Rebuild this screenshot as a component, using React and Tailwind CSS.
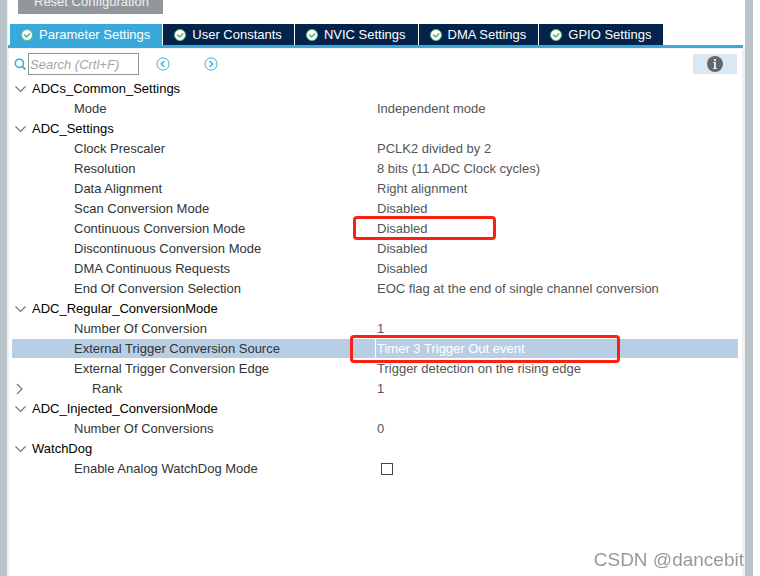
import React, { useState } from 'react';

const tabs = ['Parameter Settings', 'User Constants', 'NVIC Settings', 'DMA Settings', 'GPIO Settings'];

const groups = [
  {
    name: 'ADCs_Common_Settings',
    params: [{ name: 'Mode', value: 'Independent mode' }],
  },
  {
    name: 'ADC_Settings',
    params: [
      { name: 'Clock Prescaler', value: 'PCLK2 divided by 2' },
      { name: 'Resolution', value: '8 bits (11 ADC Clock cycles)' },
      { name: 'Data Alignment', value: 'Right alignment' },
      { name: 'Scan Conversion Mode', value: 'Disabled' },
      { name: 'Continuous Conversion Mode', value: 'Disabled', mark: 'small' },
      { name: 'Discontinuous Conversion Mode', value: 'Disabled' },
      { name: 'DMA Continuous Requests', value: 'Disabled' },
      { name: 'End Of Conversion Selection', value: 'EOC flag at the end of single channel conversion' },
    ],
  },
  {
    name: 'ADC_Regular_ConversionMode',
    params: [
      { name: 'Number Of Conversion', value: '1' },
      { name: 'External Trigger Conversion Source', value: 'Timer 3 Trigger Out event', mark: 'large' },
      { name: 'External Trigger Conversion Edge', value: 'Trigger detection on the rising edge' },
      { name: 'Rank', value: '1', nested: true },
    ],
  },
  {
    name: 'ADC_Injected_ConversionMode',
    params: [{ name: 'Number Of Conversions', value: '0' }],
  },
  {
    name: 'WatchDog',
    params: [{ name: 'Enable Analog WatchDog Mode', checkbox: true }],
  },
];

const CheckBadge = () => (
  <svg className="w-3 h-3 shrink-0" viewBox="0 0 12 12" fill="none">
    <circle cx="6" cy="6" r="5.5" fill="#fff" stroke="#5cb883" strokeWidth="0.9" />
    <path d="M3.1 5.5l2.5 2.5 3.5-3.5" stroke="#4bb377" strokeWidth="1.5" />
  </svg>
);

const SearchIcon = () => (
  <svg className="w-3 h-3 shrink-0" viewBox="0 0 12 12" fill="none" stroke="#39a9dc">
    <circle cx="5.4" cy="5.3" r="4.1" strokeWidth="1.5" />
    <path d="M8.3 8.3l3.2 3.2" strokeWidth="1.8" />
  </svg>
);

const Chevron = ({ open }) => (
  <svg className="w-[14px] h-[14px]" viewBox="0 0 14 14" fill="none" stroke="#777777" strokeWidth="1.2">
    <path d={open ? 'M1.5 4.5l5 5 5-5' : 'M3 2l5 5-5 5'} />
  </svg>
);

const StepButton = ({ label, d }) => (
  <button type="button" aria-label={label} className="w-[14px] h-[14px]">
    <svg className="w-[14px] h-[14px]" viewBox="0 0 14 14" fill="none" stroke="#39a9dc">
      <circle cx="7" cy="7" r="6.1" strokeWidth="1" />
      <path d={d} strokeWidth="1.3" />
    </svg>
  </button>
);

const Mark = ({ size }) => (
  <span
    className={
      size === 'small'
        ? 'absolute z-10 -left-[22px] -top-[3px] w-[143px] h-6 border-3 border-[#fb2010] rounded-sm'
        : 'absolute z-10 -left-[25px] -top-1 w-[270px] h-7 border-3 border-[#fb2010] rounded-sm'
    }
  ></span>
);

const ParamRow = ({ param, selected, onSelect }) => (
  <tr className="h-5" onClick={onSelect}>
    <th scope="row" className="p-0 pb-px font-normal text-left text-[#333333]">
      <div className={`flex items-center h-[19px] ${selected ? 'bg-[#b8cee5]' : ''}`}>
        <span className="flex w-[62px] pl-[2px]">
          {param.nested && (
            <button type="button" aria-label={`Expand ${param.name}`}>
              <Chevron open={false} />
            </button>
          )}
        </span>
        <label htmlFor={param.checkbox ? 'watchdog' : undefined} className={param.nested ? 'pl-[18px]' : ''}>
          {param.name}
        </label>
      </div>
    </th>
    <td className="relative p-0 pb-px text-[#555555]">
      <div
        className={`flex items-center h-[19px] border-l pl-px ${
          selected ? 'bg-[#b8cee5] border-white text-white' : 'border-transparent'
        }`}
      >
        {param.checkbox ? (
          <input
            id="watchdog"
            type="checkbox"
            className="appearance-none w-3 h-3 ml-1 border border-[#444444] bg-white checked:bg-[#39a9dc]"
          />
        ) : (
          param.value
        )}
      </div>
      {param.mark && <Mark size={param.mark} />}
    </td>
  </tr>
);

const ParamGroup = ({ group, selected, onSelect }) => {
  const [open, setOpen] = useState(true);

  return (
    <tbody>
      <tr className="h-5">
        <th colSpan={2} scope="rowgroup" className="p-0 pb-px font-normal text-left text-black">
          <button type="button" onClick={() => setOpen(!open)} className="flex items-center gap-1 h-[19px] pl-[2px]">
            <Chevron open={open} />
            {group.name}
          </button>
        </th>
      </tr>
      {open &&
        group.params.map((param) => (
          <ParamRow
            key={param.name}
            param={param}
            selected={selected === param.name}
            onSelect={() => onSelect(param.name)}
          />
        ))}
    </tbody>
  );
};

export default function App() {
  const [activeTab, setActiveTab] = useState('Parameter Settings');
  const [selected, setSelected] = useState('External Trigger Conversion Source');

  return (
    <div className="min-h-screen flex bg-white pr-[7px] text-[13px] leading-[19px] font-['Liberation_Sans',Arial,sans-serif]">
      <div className="w-[7px] shrink-0 bg-[#b8c4ca]"></div>

      <main className="flex-1 min-w-0 flex flex-col border-l border-[#e9edf1]">
        <div className="flex items-end h-[14px] overflow-hidden pl-[10px] shrink-0">
          <button type="button" className="h-[25px] pl-4 pr-[14px] shrink-0 bg-[#91989d] text-[#f0f0f0]">
            Reset Configuration
          </button>
        </div>

        <div role="tablist" className="flex gap-px mt-[10px] pl-[2px] mr-[2px] border-b-3 border-[#39a9dc]">
          {tabs.map((tab) => (
            <button
              key={tab}
              type="button"
              role="tab"
              aria-selected={activeTab === tab}
              onClick={() => setActiveTab(tab)}
              className={`flex items-center gap-[6px] h-[21px] pl-[11px] pr-3 text-white ${
                activeTab === tab ? 'bg-[#39a9dc]' : 'bg-[#03234b]'
              }`}
            >
              <CheckBadge />
              {tab}
            </button>
          ))}
        </div>

        <div className="flex-1 border-l border-r-3 border-t border-[#f0f1f2] pl-[3px] pr-1">
          <div className="flex items-center mt-1 pl-[2px] pr-px">
            <SearchIcon />
            <input
              type="text"
              aria-label="Search"
              placeholder="Search (Crtl+F)"
              className="w-[111px] h-[22px] ml-[2px] pl-px border border-[#8d959b] italic placeholder:text-[#a5a5a5] focus:outline-none"
            />
            <div className="flex gap-[34px] ml-[17px]">
              <StepButton label="Previous result" d="M8.3 4L5.3 7l3 3" />
              <StepButton label="Next result" d="M5.7 4l3 3-3 3" />
            </div>
            <button
              type="button"
              aria-label="Information"
              className="flex items-center justify-center w-11 h-5 ml-auto bg-[#d9e8f5]"
            >
              <svg className="w-4 h-4" viewBox="0 0 16 16">
                <circle cx="8" cy="8" r="8" fill="#666666" />
                <path d="M7 3h2v2H7zM6 6h3v6h1v1H6v-1h1V7H6z" fill="#d9e8f5" />
              </svg>
            </button>
          </div>

          <table className="w-full mt-1 table-fixed border-collapse">
            <colgroup>
              <col className="w-1/2" />
              <col className="w-1/2" />
            </colgroup>
            {groups.map((group) => (
              <ParamGroup key={group.name} group={group} selected={selected} onSelect={setSelected} />
            ))}
          </table>
        </div>
      </main>

      <div className="w-2 shrink-0 bg-[#b8c4ca]"></div>

      <div className="fixed right-4 bottom-1 text-[19px] leading-6 text-[#999999] [text-shadow:1px_1px_0_#ffffff]">
        CSDN @dancebit
      </div>
    </div>
  );
}
